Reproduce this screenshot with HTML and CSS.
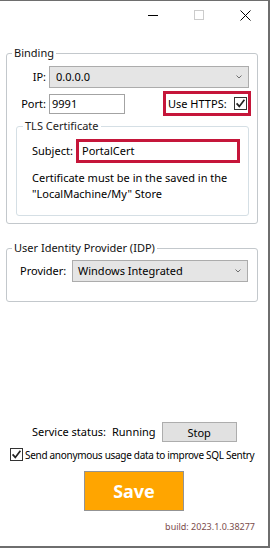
FILE: index.html
```html
<!DOCTYPE html>
<html lang="en">
<head>
<meta charset="utf-8">
<title>Portal Configuration</title>
<link rel="stylesheet" href="styles.css">
</head>
<body>
<div class="window">
  <div class="titlebar">
    <div class="tb-btn"><span class="ic-min"></span></div>
    <div class="tb-btn"><span class="ic-max"></span></div>
    <div class="tb-btn">
      <svg class="ic-close" width="11" height="11" viewBox="0 0 11 11"><path d="M0.5 0.5 L10.5 10.5 M10.5 0.5 L0.5 10.5" stroke="#000" stroke-width="1" fill="none"/></svg>
    </div>
  </div>

  <fieldset class="group binding">
    <legend>Binding</legend>
    <div class="row ip-row">
      <span class="lbl">IP:</span>
      <div class="combo combo-ip">
        <span>0.0.0.0</span>
        <svg class="chev" width="6" height="4" viewBox="0 0 6 4"><path d="M0.5 0.5 L3 3 L5.5 0.5" stroke="#707070" stroke-width="1" fill="none"/></svg>
      </div>
    </div>
    <div class="row port-row">
      <span class="lbl">Port:</span>
      <div class="textbox port-box">9991</div>
      <div class="highlight https">
        <span>Use HTTPS:</span>
        <span class="check"><svg width="11" height="11" viewBox="0 0 11 11"><path d="M1.6 5.4 L4.3 8.4 L9.4 1.8" stroke="#222" stroke-width="1.7" fill="none"/></svg></span>
      </div>
    </div>
    <fieldset class="group tls">
      <legend>TLS Certificate</legend>
      <div class="row subject-row">
        <span class="subject-lbl">Subject:</span>
        <div class="highlight subject">PortalCert</div>
      </div>
      <p class="note">Certificate must be in the saved in the<br>"LocalMachine/My" Store</p>
    </fieldset>
  </fieldset>

  <fieldset class="group idp">
    <legend>User Identity Provider (IDP)</legend>
    <div class="row provider-row">
      <span class="provider-lbl">Provider:</span>
      <div class="combo combo-provider">
        <span>Windows Integrated</span>
        <svg class="chev" width="6" height="4" viewBox="0 0 6 4"><path d="M0.5 0.5 L3 3 L5.5 0.5" stroke="#707070" stroke-width="1" fill="none"/></svg>
      </div>
    </div>
  </fieldset>

  <div class="row service-row">
    <span>Service status:</span>
    <span class="status">Running</span>
    <div class="btn stop">Stop</div>
  </div>
  <div class="row usage-row">
    <span class="check"><svg width="11" height="11" viewBox="0 0 11 11"><path d="M1.6 5.4 L4.3 8.4 L9.4 1.8" stroke="#222" stroke-width="1.7" fill="none"/></svg></span>
    <span class="usage-text">Send anonymous usage data to improve SQL Sentry</span>
  </div>
  <div class="save">Save</div>
  <div class="build">build: 2023.1.0.38277</div>
</div>
</body>
</html>
```

FILE: styles.css
```css
html, body {
  margin: 0;
  padding: 0;
  background: #fff;
}
body {
  font-family: "Noto Sans", "Open Sans", sans-serif;
  font-size: 11px;
  line-height: 16px;
  color: #000;
}
.window {
  width: 270px;
  height: 548px;
  box-sizing: border-box;
  border-top: 1px solid #6e6e6e;
  border-right: 2px solid #6e6e6e;
  border-bottom: 2px solid #6e6e6e;
  display: flex;
  flex-direction: column;
  overflow: hidden;
}
.titlebar {
  display: flex;
  justify-content: flex-end;
  height: 28px;
  flex: none;
}
.tb-btn {
  width: 46px;
  height: 28px;
  display: flex;
  align-items: center;
  justify-content: center;
}
.ic-min {
  width: 10px;
  height: 1px;
  background: #000;
}
.ic-max {
  width: 10px;
  height: 10px;
  box-sizing: border-box;
  border: 1px solid #cccccc;
}
.ic-close { display: block; }

.group {
  margin: 0;
  padding: 0;
  border: 1px solid #c3c8cc;
  border-radius: 3px;
  min-width: 0;
  flex: none;
}
.group > legend {
  padding: 0 2px;
  margin-left: 5px;
  line-height: 16px;
  color: #111;
}
.row {
  display: flex;
  align-items: center;
}
.binding {
  margin: 16px 10px 0 6px;
}
.ip-row {
  margin: 5px 8px 0 0;
}
.lbl {
  width: 39px;
  margin-right: 3px;
  text-align: right;
  flex: none;
}
.combo {
  box-sizing: border-box;
  height: 22px;
  background: #e5e5e5;
  border: 1px solid #acacac;
  display: flex;
  align-items: center;
  justify-content: space-between;
  padding: 0 6px 0 6px;
}
.combo-ip { flex: 1; }
.chev { display: block; }
.port-row {
  margin: 3px 6px 0 0;
}
.textbox {
  box-sizing: border-box;
  width: 76px;
  height: 20px;
  border: 1px solid #a3a3a3;
  padding-left: 2px;
  line-height: 18px;
  background: #fff;
}
.highlight {
  box-sizing: border-box;
  border: 3px solid #c5163a;
}
.https {
  margin-left: auto;
  width: 88px;
  height: 25px;
  display: flex;
  align-items: center;
  padding-left: 2px;
}
.check {
  box-sizing: border-box;
  width: 13px;
  height: 13px;
  border: 1px solid #333;
  background: #fff;
  display: flex;
  align-items: center;
  justify-content: center;
  flex: none;
}
.https .check {
  margin-left: auto;
  margin-right: 1px;
}
.tls {
  margin: 2px 8px 7px 9px;
  border-color: #d5dfe5;
}
.tls > legend {
  margin-left: 6px;
  color: #222;
}
.subject-row {
  margin-top: 5px;
  padding-left: 15px;
}
.subject-lbl {
  width: 44px;
  flex: none;
}
.subject {
  width: 164px;
  height: 24px;
  padding-left: 3px;
  line-height: 18px;
}
.note {
  margin: 7px 0 13px 15px;
  line-height: 16px;
}
.idp {
  margin: 16px 10px 0 6px;
}
.provider-row {
  margin-top: 4px;
  padding-left: 13px;
  padding-bottom: 19px;
}
.provider-lbl {
  width: 52px;
  flex: none;
}
.combo-provider {
  width: 176px;
  padding-left: 5px;
}
.service-row {
  margin-top: 120px;
  padding-left: 32px;
  height: 20px;
}
.status {
  margin-left: 6px;
}
.btn {
  box-sizing: border-box;
  width: 75px;
  height: 20px;
  margin-left: 6px;
  background: #e1e1e1;
  border: 1px solid #adadad;
  text-align: center;
  line-height: 19px;
}
.usage-row {
  margin-top: 5px;
  padding-left: 10px;
  height: 15px;
}
.usage-text {
  margin-left: 2px;
  white-space: nowrap;
  font-size: 10px;
  letter-spacing: -0.3px;
}
.save {
  box-sizing: border-box;
  margin: 9px 0 0 84px;
  width: 100px;
  height: 40px;
  background: #ffa500;
  border: 1px solid #939393;
  color: #fff;
  font-weight: bold;
  font-size: 18px;
  line-height: 38px;
  text-align: center;
}
.build {
  margin-top: 10px;
  padding-right: 13px;
  text-align: right;
  font-size: 9px;
  line-height: 12px;
  color: #7b4c4c;
}
```
